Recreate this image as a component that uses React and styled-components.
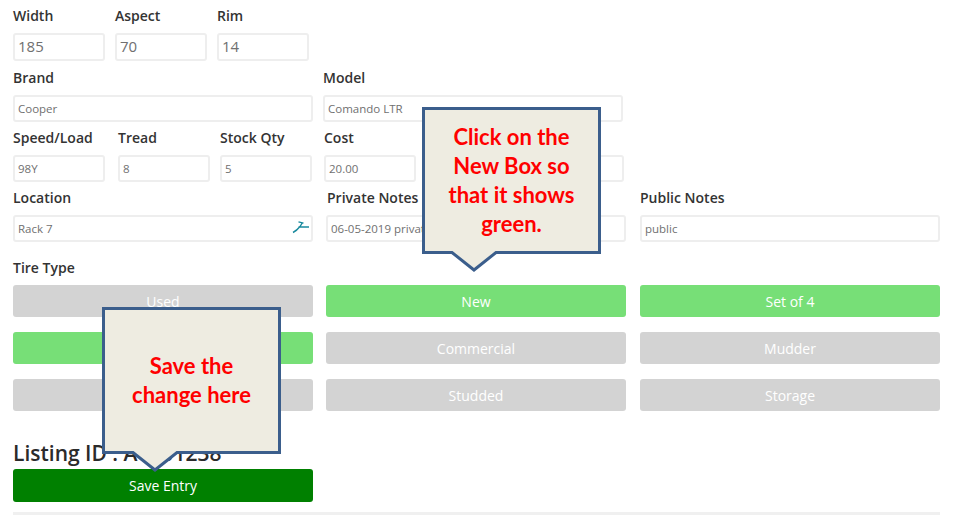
import React from 'react';
import styled, { createGlobalStyle } from 'styled-components';

const GlobalStyle = createGlobalStyle`
	html, body {
		margin: 0;
		padding: 0;
		background: #fff;
	}
	body {
		font-family: "Open Sans", "Liberation Sans", sans-serif;
		overflow: hidden;
	}
`;

const Page = styled.div`
	position: relative;
	width: 954px;
	height: 515px;
	padding: 6px 0 0 13px;
	box-sizing: border-box;
	overflow: hidden;
`;

// form rows
const Row = styled.div`
	display: flex;
	margin-top: ${(p) => p.$top || 0}px;
`;

const Field = styled.div`
	width: ${(p) => p.$w}px;
	margin-left: ${(p) => p.$left || 0}px;
	flex: none;
`;

const Label = styled.div`
	height: 20px;
	margin-left: ${(p) => p.$shift || 0}px;
	margin-bottom: 7px;
	font-size: 14px;
	font-weight: 600;
	line-height: 20px;
	color: #333;
	white-space: nowrap;
`;

const Box = styled.div`
	position: relative;
	display: flex;
	align-items: center;
	height: ${(p) => (p.$big ? 28 : 27)}px;
	padding: ${(p) => (p.$big ? '0 0 2px 3px' : '0 0 0 3px')};
	box-sizing: border-box;
	border: 2px solid #eee;
	border-radius: 3px;
	background: #fff;
	font-size: ${(p) => (p.$big ? 15 : 11.5)}px;
	color: #707070;
	white-space: nowrap;
	overflow: hidden;
`;

const RangeIcon = styled.svg`
	position: absolute;
	right: 1px;
	top: 3px;
	width: 18px;
	height: 14px;
`;

// tire type buttons
const ButtonRows = styled.div`
	display: flex;
	flex-direction: column;
	gap: 15px;
	width: 927px;
`;

const ButtonRow = styled.div`
	display: grid;
	grid-template-columns: 313px 314px 300px;
`;

const TypeButton = styled.div`
	width: 300px;
	height: 32px;
	border-radius: 3px;
	background: ${(p) => (p.$on ? '#77df77' : '#d3d3d3')};
	font-size: 14px;
	line-height: 33px;
	text-align: center;
	color: #fff;
`;

const ListingId = styled.div`
	margin-top: 26px;
	height: 32px;
	font-size: 21px;
	font-weight: 600;
	line-height: 33px;
	color: #2b2b2b;
`;

const SaveButton = styled.div`
	width: 300px;
	height: 33px;
	border-radius: 3px;
	background: #008000;
	font-size: 14px;
	line-height: 33px;
	text-align: center;
	color: #fff;
`;

const Rule = styled.div`
	width: 927px;
	height: 3px;
	margin-top: 10px;
	background: #f0f0f0;
`;

// annotation callouts
const Callout = styled.div`
	position: absolute;
	left: ${(p) => p.$x}px;
	top: ${(p) => p.$y}px;
	width: 179px;
	height: 165px;
`;

const CalloutShape = styled.svg`
	position: absolute;
	left: 0;
	top: 0;
	width: 179px;
	height: 165px;
`;

const CalloutText = styled.div`
	position: absolute;
	left: 3px;
	top: 3px;
	display: flex;
	align-items: center;
	justify-content: center;
	width: 173px;
	height: 139px;
	font-family: Lato, "Open Sans", sans-serif;
	font-size: 22px;
	font-weight: 700;
	line-height: 29px;
	text-align: center;
	color: #f00;
`;

const Bubble = ({ x, y, tip, children }) => (
	<Callout $x={x} $y={y}>
		<CalloutShape viewBox="0 0 179 165">
			<path
				d={`M1.5 1.5H177.5V145.5H${tip + 22}L${tip} 163L${tip - 22} 145.5H1.5Z`}
				fill="#eeece1"
				stroke="#3b5e8c"
				strokeWidth="3"
				strokeLinejoin="miter"
			/>
		</CalloutShape>
		<CalloutText>{children}</CalloutText>
	</Callout>
);

const App = () => {
	return (
		<Page>
			<GlobalStyle />
			<Row>
				<Field $w={92}>
					<Label>Width</Label>
					<Box $big>185</Box>
				</Field>
				<Field $w={92} $left={10}>
					<Label>Aspect</Label>
					<Box $big>70</Box>
				</Field>
				<Field $w={92} $left={10}>
					<Label>Rim</Label>
					<Box $big>14</Box>
				</Field>
			</Row>
			<Row $top={7}>
				<Field $w={300}>
					<Label>Brand</Label>
					<Box>Cooper</Box>
				</Field>
				<Field $w={300} $left={10}>
					<Label>Model</Label>
					<Box>Comando LTR</Box>
				</Field>
			</Row>
			<Row $top={6}>
				<Field $w={92}>
					<Label>Speed/Load</Label>
					<Box>98Y</Box>
				</Field>
				<Field $w={92} $left={13}>
					<Label>Tread</Label>
					<Box>8</Box>
				</Field>
				<Field $w={92} $left={10}>
					<Label>Stock Qty</Label>
					<Box>5</Box>
				</Field>
				<Field $w={92} $left={12}>
					<Label>Cost</Label>
					<Box>20.00</Box>
				</Field>
				<Field $w={92} $left={116}>
					<Label>&nbsp;</Label>
					<Box />
				</Field>
			</Row>
			<Row $top={6}>
				<Field $w={300}>
					<Label>Location</Label>
					<Box>
						Rack 7
						<RangeIcon viewBox="0 0 18 14">
							<path
								d="M1 12.5C4 11 6 9 8 6.5L10.5 2.5M6.5 1.8L11.5 3.2M6.5 7H17"
								fill="none"
								stroke="#1a8a9e"
								strokeWidth="1.4"
							/>
						</RangeIcon>
					</Box>
				</Field>
				<Field $w={300} $left={13}>
					<Label $shift={1}>Private Notes</Label>
					<Box>06-05-2019 private</Box>
				</Field>
				<Field $w={300} $left={14}>
					<Label>Public Notes</Label>
					<Box>public</Box>
				</Field>
			</Row>
			<Row $top={16}>
				<Field $w={300}>
					<Label>Tire Type</Label>
				</Field>
			</Row>
			<ButtonRows>
				<ButtonRow>
					<TypeButton>Used</TypeButton>
					<TypeButton $on>New</TypeButton>
					<TypeButton $on>Set of 4</TypeButton>
				</ButtonRow>
				<ButtonRow>
					<TypeButton $on />
					<TypeButton>Commercial</TypeButton>
					<TypeButton>Mudder</TypeButton>
				</ButtonRow>
				<ButtonRow>
					<TypeButton />
					<TypeButton>Studded</TypeButton>
					<TypeButton>Storage</TypeButton>
				</ButtonRow>
			</ButtonRows>
			<ListingId>Listing ID : A0001238</ListingId>
			<SaveButton>Save Entry</SaveButton>
			<Rule />
			<Bubble x={422} y={107} tip={52}>
				<span>
					Click on the
					<br />
					New Box so
					<br />
					that it shows
					<br />
					green.
				</span>
			</Bubble>
			<Bubble x={102} y={307} tip={53}>
				<span>
					Save the
					<br />
					change here
				</span>
			</Bubble>
		</Page>
	);
};

export default App;
